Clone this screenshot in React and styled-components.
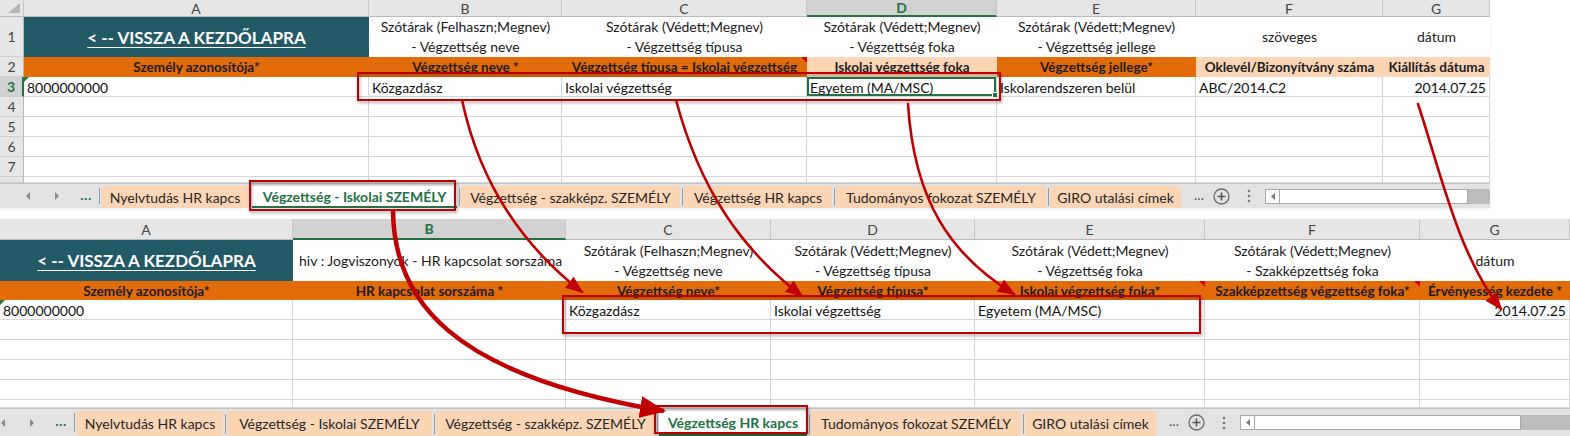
import React from "react";
import styled, { createGlobalStyle, css } from "styled-components";

const ORANGE = "#e26b0a";
const PEACH = "#fcd5b4";
const TEAL = "#215967";
const GREEN = "#217346";
const GRID = "#d6d6d6";
const RED = "#c00000";

const GlobalStyle = createGlobalStyle`
  *, *::before, *::after { box-sizing: border-box; }
  html, body { margin: 0; padding: 0; background: #fff; }
  body { font-family: Lato, "Liberation Sans", sans-serif; color: #111; }
`;

const topSheet = {
  width: 1490,
  crop: 0,
  rowHeadW: 24,
  headH: 17,
  selCol: "D",
  selRow: 3,
  cols: [
    { l: "A", w: 345 },
    { l: "B", w: 193 },
    { l: "C", w: 245 },
    { l: "D", w: 190 },
    { l: "E", w: 199 },
    { l: "F", w: 187 },
    { l: "G", w: 107 },
  ],
  rows: [
    {
      h: 40,
      num: "1",
      cells: [
        { k: "title", t: "< -- VISSZA A KEZDŐLAPRA" },
        { k: "note", t: ["Szótárak (Felhaszn;Megnev)", "- Végzettség neve"] },
        { k: "note", t: ["Szótárak (Védett;Megnev)", "- Végzettség típusa"] },
        { k: "note", t: ["Szótárak (Védett;Megnev)", "- Végzettség foka"] },
        { k: "note", t: ["Szótárak (Védett;Megnev)", "- Végzettség jellege"] },
        { k: "note", t: ["szöveges"] },
        { k: "note", t: ["dátum"] },
      ],
    },
    {
      h: 20,
      num: "2",
      cells: [
        { k: "head", t: "Személy azonosítója*" },
        { k: "head", t: "Végzettség neve *" },
        { k: "head", t: "Végzettség típusa = Iskolai végzettség", comment: true },
        { k: "head", t: "Iskolai végzettség foka", peach: true },
        { k: "head", t: "Végzettség jellege*" },
        { k: "head", t: "Oklevél/Bizonyítvány száma", peach: true },
        { k: "head", t: "Kiállítás dátuma", peach: true },
      ],
    },
    {
      h: 20,
      num: "3",
      cells: [
        { t: "8000000000", flag: true },
        { t: "Közgazdász" },
        { t: "Iskolai végzettség" },
        { t: "Egyetem (MA/MSC)", sel: true },
        { t: "Iskolarendszeren belül" },
        { t: "ABC/2014.C2" },
        { t: "2014.07.25", right: true },
      ],
    },
    { h: 20, num: "4" },
    { h: 20, num: "5" },
    { h: 20, num: "6" },
    { h: 20, num: "7" },
    { h: 6, num: "" },
  ],
  tabBar: { h: 25, thumb: 188 },
  active: 1,
};

// the lower screenshot is cropped: its row-number column lies outside the picture
const bottomSheet = {
  width: 1570,
  crop: 25,
  rowHeadW: 25,
  headH: 21,
  selCol: "B",
  selRow: 0,
  cols: [
    { l: "A", w: 293 },
    { l: "B", w: 273 },
    { l: "C", w: 205 },
    { l: "D", w: 204 },
    { l: "E", w: 230 },
    { l: "F", w: 215 },
    { l: "G", w: 150 },
  ],
  rows: [
    {
      h: 41,
      num: "",
      cells: [
        { k: "title", t: "< -- VISSZA A KEZDŐLAPRA" },
        { k: "note", t: ["hiv : Jogviszonyok - HR kapcsolat sorszáma"], left: true },
        { k: "note", t: ["Szótárak (Felhaszn;Megnev)", "- Végzettség neve"] },
        { k: "note", t: ["Szótárak (Védett;Megnev)", "- Végzettség típusa"] },
        { k: "note", t: ["Szótárak (Védett;Megnev)", "- Végzettség foka"] },
        { k: "note", t: ["Szótárak (Védett;Megnev)", "- Szakképzettség foka"] },
        { k: "note", t: ["dátum"] },
      ],
    },
    {
      h: 19,
      num: "",
      cells: [
        { k: "head", t: "Személy azonosítója*" },
        { k: "head", t: "HR kapcsolat sorszáma *" },
        { k: "head", t: "Végzettség neve*" },
        { k: "head", t: "Végzettség típusa*" },
        { k: "head", t: "Iskolai végzettség foka*", comment: true },
        { k: "head", t: "Szakképzettség végzettség foka*", comment: true },
        { k: "head", t: "Érvényesség kezdete *" },
      ],
    },
    {
      h: 20,
      num: "",
      cells: [
        { t: "8000000000", flag: true },
        { t: "" },
        { t: "Közgazdász" },
        { t: "Iskolai végzettség" },
        { t: "Egyetem (MA/MSC)" },
        { t: "" },
        { t: "2014.07.25", right: true },
      ],
    },
    { h: 20, num: "" },
    { h: 20, num: "" },
    { h: 20, num: "" },
    { h: 20, num: "" },
    { h: 8, num: "" },
  ],
  tabBar: { h: 28, thumb: 266 },
  active: 3,
};

const tabs = [
  { label: "Nyelvtudás HR kapcs", w: 146 },
  { label: "Végzettség - Iskolai SZEMÉLY", w: 205 },
  { label: "Végzettség - szakképz. SZEMÉLY", w: 219 },
  { label: "Végzettség HR kapcs", w: 148 },
  { label: "Tudományos fokozat SZEMÉLY", w: 210 },
  { label: "GIRO utalási címek", w: 131 },
];

function Cell({ cell }) {
  if (!cell) return <DataCell />;
  if (cell.k === "title") {
    return (
      <TitleCell>
        <TitleLink>{cell.t}</TitleLink>
      </TitleCell>
    );
  }
  if (cell.k === "note") {
    return (
      <NoteCell $left={cell.left}>
        {cell.t.map((line) => (
          <span key={line}>{line}</span>
        ))}
      </NoteCell>
    );
  }
  if (cell.k === "head") {
    return (
      <HeadCell $peach={cell.peach} $comment={cell.comment}>
        {cell.t}
      </HeadCell>
    );
  }
  return (
    <DataCell $right={cell.right} $flag={cell.flag} $sel={cell.sel}>
      {cell.t}
      {cell.sel && <FillHandle />}
    </DataCell>
  );
}

function NavArrow({ dir }) {
  return (
    <svg width="6" height="8" viewBox="0 0 6 8">
      <path
        d={dir === "left" ? "M5 0 L1 4 L5 8 Z" : "M1 0 L5 4 L1 8 Z"}
        fill="#8a8a8a"
      />
    </svg>
  );
}

function TabBar({ bar, active }) {
  return (
    <TabBarWrap $h={bar.h}>
      <Nav>
        <NavSlot>
          <NavArrow dir="left" />
        </NavSlot>
        <NavSlot>
          <NavArrow dir="right" />
        </NavSlot>
        <NavSlot $dots>...</NavSlot>
        <NavSep />
      </Nav>
      <Tabs>
        {tabs.map((t, i) => (
          <React.Fragment key={t.label}>
            {i > 0 && <TabSep />}
            <Tab $w={t.w} $active={i === active}>
              {t.label}
            </Tab>
          </React.Fragment>
        ))}
      </Tabs>
      <More>...</More>
      <AddBtn>
        <svg width="17" height="17" viewBox="0 0 17 17">
          <circle cx="8.5" cy="8.5" r="7.5" fill="none" stroke="#6a6a6a" strokeWidth="1.3" />
          <path d="M8.5 4.5 V12.5 M4.5 8.5 H12.5" stroke="#5a5a5a" strokeWidth="1.6" />
        </svg>
      </AddBtn>
      <Dots>
        <svg width="4" height="14" viewBox="0 0 4 14">
          <circle cx="2" cy="2" r="1.3" fill="#777" />
          <circle cx="2" cy="7" r="1.3" fill="#777" />
          <circle cx="2" cy="12" r="1.3" fill="#777" />
        </svg>
      </Dots>
      <ScrollArea>
        <ScrollTrack>
          <ScrollBtn>
            <svg width="4" height="7" viewBox="0 0 4 7">
              <path d="M4 0 L0 3.5 L4 7 Z" fill="#777" />
            </svg>
          </ScrollBtn>
          <ScrollThumb style={{ width: bar.thumb }} />
        </ScrollTrack>
      </ScrollArea>
    </TabBarWrap>
  );
}

function Sheet({ sheet }) {
  const colTpl = [sheet.rowHeadW, ...sheet.cols.map((c) => c.w)]
    .map((w) => `${w}px`)
    .join(" ");
  const rowTpl = [sheet.headH, ...sheet.rows.map((r) => r.h)]
    .map((h) => `${h}px`)
    .join(" ");
  return (
    <SheetFrame $width={sheet.width}>
      <SheetInner $crop={sheet.crop} $width={sheet.width}>
        <Grid $cols={colTpl} $rows={rowTpl}>
          <Corner />
          {sheet.cols.map((c) => (
            <ColHead key={c.l} $sel={c.l === sheet.selCol}>
              {c.l}
            </ColHead>
          ))}
          {sheet.rows.map((row, ri) => (
            <React.Fragment key={ri}>
              <RowHead $sel={ri + 1 === sheet.selRow}>{row.num}</RowHead>
              {sheet.cols.map((c, ci) => (
                <Cell key={c.l} cell={row.cells ? row.cells[ci] : null} />
              ))}
            </React.Fragment>
          ))}
        </Grid>
        <TabBar bar={sheet.tabBar} active={sheet.active} />
      </SheetInner>
    </SheetFrame>
  );
}

function Annotations() {
  return (
    <Overlay width="1570" height="436" viewBox="0 0 1570 436">
      <defs>
        <marker
          id="head"
          markerUnits="userSpaceOnUse"
          markerWidth="18"
          markerHeight="14"
          refX="16"
          refY="7"
          orient="auto"
        >
          <path d="M0 0 L18 7 L0 14 Z" fill={RED} />
        </marker>
        <marker
          id="headBig"
          markerUnits="userSpaceOnUse"
          markerWidth="26"
          markerHeight="22"
          refX="24"
          refY="11"
          orient="auto"
        >
          <path d="M0 0 L26 11 L0 22 Z" fill={RED} />
        </marker>
        <filter id="shade" x="-5%" y="-30%" width="110%" height="180%">
          <feDropShadow dx="1" dy="2" stdDeviation="1.5" floodColor="#000" floodOpacity="0.35" />
        </filter>
      </defs>
      <g fill="none" stroke={RED} strokeWidth="2" filter="url(#shade)">
        <rect x="358" y="73" width="642" height="27" />
        <rect x="250" y="181" width="205" height="29" />
        <rect x="563" y="296" width="637" height="37" />
        <rect x="655" y="406" width="152" height="27" />
      </g>
      <g fill="none" stroke={RED} strokeWidth="2.6" strokeLinecap="round">
        <path d="M462 100 C478 175 515 240 582 292" markerEnd="url(#head)" />
        <path d="M676 100 C700 190 742 250 802 296" markerEnd="url(#head)" />
        <path d="M908 104 C914 200 950 255 1014 294" markerEnd="url(#head)" />
        <path d="M1418 104 C1440 170 1458 255 1501 309" markerEnd="url(#head)" />
      </g>
      <path
        d="M393 211 C394 300 450 375 664 411"
        fill="none"
        stroke={RED}
        strokeWidth="4.5"
        markerEnd="url(#headBig)"
      />
    </Overlay>
  );
}

export default function App() {
  return (
    <>
      <GlobalStyle />
      <Page>
        <Stack>
          <Sheet sheet={topSheet} />
          <Sheet sheet={bottomSheet} />
        </Stack>
        <Annotations />
      </Page>
    </>
  );
}

const Page = styled.div`
  position: relative;
  width: 1570px;
  height: 436px;
  overflow: hidden;
  background: #fff;
`;

const Stack = styled.div`
  display: flex;
  flex-direction: column;
  gap: 11px;
`;

const SheetFrame = styled.div`
  width: ${(p) => p.$width}px;
  overflow: hidden;
  box-shadow: 0 1px 3px rgba(0, 0, 0, 0.08);
`;

const SheetInner = styled.div`
  margin-left: -${(p) => p.$crop}px;
  width: ${(p) => p.$width + p.$crop}px;
`;

const Grid = styled.div`
  display: grid;
  grid-template-columns: ${(p) => p.$cols};
  grid-template-rows: ${(p) => p.$rows};
  overflow: hidden;
`;

const headBase = css`
  background: #e6e6e6;
  color: #444;
  font-size: 14px;
  display: flex;
  align-items: center;
  justify-content: center;
`;

const Corner = styled.div`
  ${headBase};
  position: relative;
  border-right: 1px solid #c4c4c4;
  border-bottom: 1px solid #b8b8b8;
  &::after {
    content: "";
    position: absolute;
    right: 3px;
    bottom: 3px;
    border-left: 12px solid transparent;
    border-bottom: 10px solid #b5b5b5;
  }
`;

const ColHead = styled.div`
  ${headBase};
  border-right: 1px solid #c8c8c8;
  border-bottom: 1px solid #b8b8b8;
  ${(p) =>
    p.$sel &&
    css`
      background: #d2d2d2;
      color: ${GREEN};
      font-weight: 700;
      border-bottom: 2px solid ${GREEN};
    `}
`;

const RowHead = styled.div`
  ${headBase};
  border-right: 1px solid #b8b8b8;
  border-bottom: 1px solid #cfcfcf;
  overflow: hidden;
  ${(p) =>
    p.$sel &&
    css`
      background: #d2d2d2;
      color: ${GREEN};
      font-weight: 700;
      border-right: 2px solid ${GREEN};
    `}
`;

const cellBase = css`
  position: relative;
  overflow: hidden;
  display: flex;
  align-items: center;
  white-space: nowrap;
  font-size: 14px;
`;

const TitleCell = styled.div`
  ${cellBase};
  background: ${TEAL};
  justify-content: center;
`;

const TitleLink = styled.span`
  color: #fff;
  font-weight: 700;
  font-size: 17px;
  text-decoration: underline;
  text-underline-offset: 3px;
  text-decoration-thickness: 1px;
`;

const NoteCell = styled.div`
  ${cellBase};
  background: #fff;
  flex-direction: column;
  justify-content: center;
  align-items: ${(p) => (p.$left ? "flex-start" : "center")};
  padding-left: ${(p) => (p.$left ? 6 : 0)}px;
  line-height: 20px;
  color: #1a1a1a;
`;

const HeadCell = styled.div`
  ${cellBase};
  justify-content: center;
  background: ${(p) => (p.$peach ? PEACH : ORANGE)};
  font-weight: 700;
  font-size: 13.5px;
  color: #1c1c1c;
  ${(p) =>
    p.$comment &&
    css`
      &::after {
        content: "";
        position: absolute;
        top: 0;
        right: 0;
        border-left: 6px solid transparent;
        border-top: 6px solid #e00000;
      }
    `}
`;

const DataCell = styled.div`
  ${cellBase};
  background: #fff;
  padding: 2px 3px 0;
  justify-content: ${(p) => (p.$right ? "flex-end" : "flex-start")};
  border-right: 1px solid ${GRID};
  border-bottom: 1px solid ${GRID};
  color: #111;
  ${(p) =>
    p.$flag &&
    css`
      &::before {
        content: "";
        position: absolute;
        top: 0;
        left: 0;
        border-right: 5px solid transparent;
        border-top: 5px solid #1e7a3c;
      }
    `}
  ${(p) =>
    p.$sel &&
    css`
      box-shadow: inset 0 0 0 2px ${GREEN};
      overflow: visible;
    `}
`;

const FillHandle = styled.span`
  position: absolute;
  right: -2px;
  bottom: -2px;
  width: 6px;
  height: 6px;
  background: ${GREEN};
  border: 1px solid #fff;
`;

const TabBarWrap = styled.div`
  height: ${(p) => p.$h}px;
  background: #e3e3e3;
  border-top: 1px solid #c4c4c4;
  display: flex;
  align-items: stretch;
  font-size: 14px;
`;

const Nav = styled.div`
  flex: none;
  width: 100px;
  display: flex;
  align-items: center;
  gap: 15px;
  padding-left: 21px;
`;

const NavSlot = styled.div`
  width: 14px;
  display: flex;
  justify-content: center;
  align-items: center;
  ${(p) =>
    p.$dots &&
    css`
      color: ${GREEN};
      font-weight: 700;
      letter-spacing: 0.5px;
      padding-bottom: 4px;
    `}
`;

const NavSep = styled.div`
  width: 1px;
  height: 70%;
  margin-left: -9px;
  background: #9c9c9c;
`;

const Tabs = styled.div`
  display: flex;
  margin-left: 2px;
  padding-top: 2px;
`;

const TabSep = styled.div`
  width: 4px;
  display: flex;
  justify-content: center;
  align-items: center;
  &::after {
    content: "";
    width: 1px;
    height: 80%;
    background: #9a9a9a;
  }
`;

const Tab = styled.div`
  width: ${(p) => p.$w}px;
  background: ${PEACH};
  color: #262626;
  display: flex;
  align-items: center;
  justify-content: center;
  white-space: nowrap;
  ${(p) =>
    p.$active &&
    css`
      background: #fff;
      color: ${GREEN};
      font-weight: 700;
      border-bottom: 2px solid ${GREEN};
    `}
`;

const More = styled.div`
  width: 18px;
  margin-left: 9px;
  display: flex;
  align-items: center;
  justify-content: center;
  color: #555;
  padding-bottom: 4px;
`;

const AddBtn = styled.div`
  width: 17px;
  margin-left: 5px;
  display: flex;
  align-items: center;
  justify-content: center;
`;

const Dots = styled.div`
  width: 10px;
  margin-left: 14px;
  display: flex;
  align-items: center;
  justify-content: center;
`;

const ScrollArea = styled.div`
  flex: 1;
  margin-left: 11px;
  display: flex;
  align-items: center;
`;

const ScrollTrack = styled.div`
  flex: 1;
  height: 15px;
  background: #bcbcbc;
  display: flex;
`;

const ScrollBtn = styled.div`
  width: 15px;
  background: #fff;
  border: 1px solid #a8a8a8;
  display: flex;
  align-items: center;
  justify-content: center;
`;

const ScrollThumb = styled.div`
  background: #fff;
  border: 1px solid #a8a8a8;
  border-left: none;
`;

const Overlay = styled.svg`
  position: absolute;
  left: 0;
  top: 0;
  pointer-events: none;
`;
